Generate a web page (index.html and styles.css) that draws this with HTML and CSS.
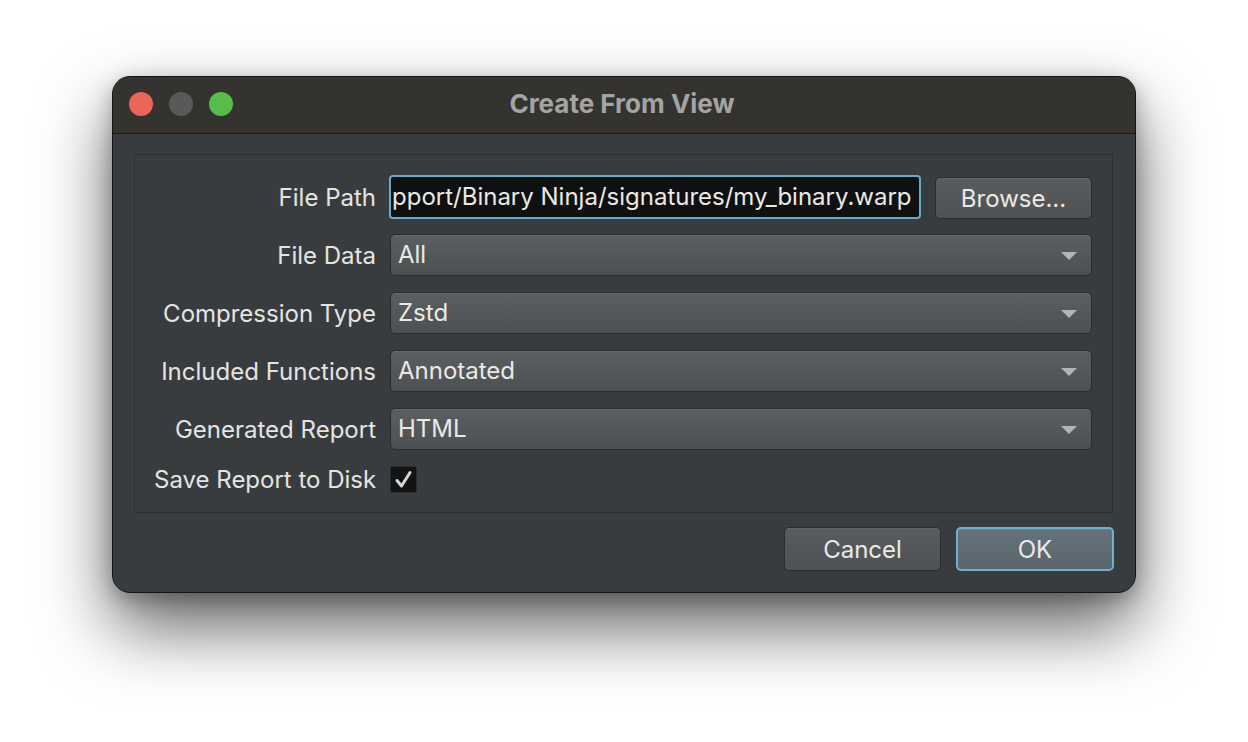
FILE: index.html
```html
<!DOCTYPE html>
<html lang="en">
<head>
  <meta charset="UTF-8">
  <title>Create From View</title>
  <link rel="stylesheet" href="styles.css">
</head>
<body>

<div class="window">
  <div class="titlebar">
    <div class="lights">
      <span class="light red"></span>
      <span class="light gray"></span>
      <span class="light green"></span>
    </div>
    <div class="title">Create From View</div>
  </div>

  <div class="content">
    <div class="group">
      <label class="label">File Path</label>
      <div class="path-row">
        <div class="path-input">pport/Binary Ninja/signatures/my_binary.warp</div>
        <button class="btn browse">Browse...</button>
      </div>

      <label class="label">File Data</label>
      <div class="combo">All<span class="arrow"></span></div>

      <label class="label">Compression Type</label>
      <div class="combo">Zstd<span class="arrow"></span></div>

      <label class="label">Included Functions</label>
      <div class="combo">Annotated<span class="arrow"></span></div>

      <label class="label">Generated Report</label>
      <div class="combo">HTML<span class="arrow"></span></div>

      <label class="label">Save Report to Disk</label>
      <div class="check-cell">
        <span class="checkbox">
          <svg width="19" height="19" viewBox="0 0 19 19">
            <path d="M3 10.5 L7.5 16 L16 2.5" fill="none" stroke="#d6d6d6" stroke-width="3" stroke-linecap="round" stroke-linejoin="round"/>
          </svg>
        </span>
      </div>
    </div>

    <div class="actions">
      <button class="btn">Cancel</button>
      <button class="btn default">OK</button>
    </div>
  </div>
</div>

</body>
</html>
```

FILE: styles.css
```css
html {
  background-color: #ffffff;
}

body {
  margin: 0;
  min-height: 742px;
  box-sizing: border-box;
  padding: 76px 0 0 112px;
  font-family: Inter, "Noto Sans", sans-serif;
}

.window {
  width: 1024px;
  height: 517px;
  box-sizing: border-box;
  border: 1px solid #141414;
  border-radius: 18px;
  background-color: #383c3e;
  overflow: hidden;
  box-shadow: 0 34px 70px rgba(0, 0, 0, 0.62), 0 6px 20px rgba(0, 0, 0, 0.25);
  display: flex;
  flex-direction: column;
}

.titlebar {
  height: 56px;
  background-color: #353330;
  border-bottom: 1px solid #191919;
  position: relative;
  display: flex;
  align-items: center;
  justify-content: center;
  flex-shrink: 0;
}

.lights {
  position: absolute;
  left: 16px;
  top: 15px;
  display: flex;
  gap: 16px;
}

.light {
  width: 24px;
  height: 24px;
  border-radius: 50%;
}

.light.red { background-color: #ec6559; }
.light.gray { background-color: #595959; }
.light.green { background-color: #57bd4a; }

.title {
  color: #a4a4a4;
  font-size: 26px;
  font-weight: 700;
  margin-top: -3px;
  margin-left: -4px;
}

.content {
  flex: 1;
  padding: 20px 22px 22px 21px;
  box-shadow: inset 0 -1px 0 #686a6b;
}

.group {
  border: 1px solid #2c2f31;
  padding: 21px 20px 19px 19px;
  display: grid;
  grid-template-columns: 222px 1fr;
  grid-template-rows: repeat(5, 42px) 27px;
  column-gap: 14px;
  row-gap: 16px;
  align-items: center;
}

.label {
  text-align: right;
  color: #e6e4e1;
  font-size: 24px;
  white-space: nowrap;
}

.path-row {
  display: flex;
  gap: 14px;
  height: 42px;
}

.path-input {
  flex: 1;
  height: 44px;
  margin-top: -1px;
  margin-left: -1px;
  box-sizing: border-box;
  border: 2px solid #63aacb;
  border-radius: 4px;
  background-color: #0f1110;
  color: #ebe9e6;
  font-size: 24px;
  line-height: 40px;
  padding-left: 1px;
  overflow: hidden;
  white-space: nowrap;
}

.combo {
  position: relative;
  height: 42px;
  box-sizing: border-box;
  border: 1px solid #2a2c2e;
  border-radius: 5px;
  background: linear-gradient(#5c5f61, #4d5052);
  box-shadow: inset 0 1px 0 rgba(255, 255, 255, 0.06);
  color: #ebe9e6;
  font-size: 24px;
  line-height: 40px;
  padding-left: 7px;
}

.arrow {
  position: absolute;
  right: 14px;
  top: 17px;
  width: 0;
  height: 0;
  border-left: 8px solid transparent;
  border-right: 8px solid transparent;
  border-top: 8px solid #b4b4b4;
}

.check-cell {
  display: flex;
  align-items: center;
}

.checkbox {
  width: 27px;
  height: 27px;
  box-sizing: border-box;
  border: 1px solid #2a2c2d;
  border-radius: 2px;
  background-color: #121413;
  display: flex;
  align-items: center;
  justify-content: center;
}

.btn {
  width: 157px;
  height: 42px;
  box-sizing: border-box;
  border: 1px solid #2a2c2e;
  border-radius: 5px;
  background: linear-gradient(#595c5e, #4f5254);
  box-shadow: inset 0 1px 0 rgba(255, 255, 255, 0.06);
  color: #ebe9e6;
  font-family: Inter, "Noto Sans", sans-serif;
  font-size: 24px;
  padding: 0;
}

.browse {
  flex-shrink: 0;
  margin-top: 1px;
}

.actions {
  display: flex;
  justify-content: flex-end;
  gap: 15px;
  margin-top: 14px;
  margin-right: -1px;
}

.actions .btn {
  height: 44px;
}

.btn.default {
  width: 158px;
  border: 2px solid #6cb2d0;
  background: linear-gradient(#65727a, #5a666c);
}
```
